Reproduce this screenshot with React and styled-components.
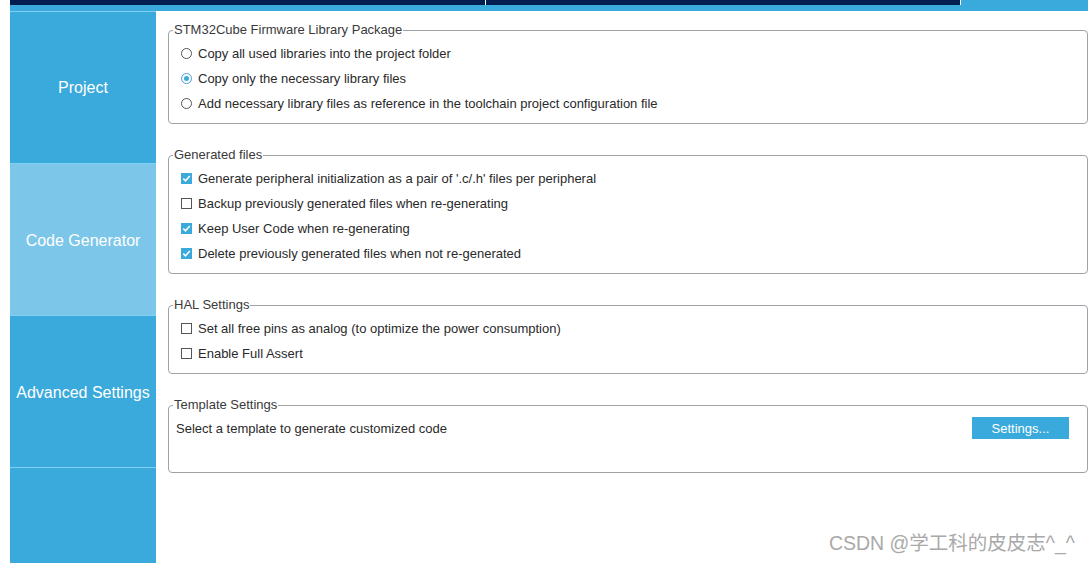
import React from "react";
import styled, { createGlobalStyle } from "styled-components";

const Global = createGlobalStyle`
  html, body { margin: 0; padding: 0; background: #fff; }
  body { font-family: "Liberation Sans", Arial, sans-serif; overflow: hidden; }
  * { box-sizing: border-box; }
`;

const BLUE = "#3aa9db";
const NAVY = "#001e50";

const Page = styled.div`
  position: relative;
  width: 1088px;
  height: 563px;
  display: flex;
  flex-direction: column;
`;

const TopBar = styled.div`
  display: flex;
  height: 5px;
  margin-left: 10px;
`;

const TopTab = styled.div`
  flex: ${(p) => (p.$grow ? 1 : "none")};
  width: ${(p) => (p.$w ? p.$w + "px" : "auto")};
  background: ${(p) => (p.$active ? BLUE : NAVY)};
  border-right: ${(p) => (p.$last ? "none" : "1px solid #fff")};
`;

const Strip = styled.div`
  height: 6px;
  margin-left: 10px;
  background: ${BLUE};
`;

const Main = styled.div`
  flex: 1;
  display: flex;
`;

const Sidebar = styled.nav`
  width: 146px;
  margin-left: 10px;
  background: ${BLUE};
  border-top: 1px solid #7fd0f3;
  display: flex;
  flex-direction: column;
`;

const NavItem = styled.div`
  height: 152px;
  padding-top: ${(p) => (p.$first ? 0 : 2)}px;
  border-bottom: 1px solid #7fd0f3;
  background: ${(p) => (p.$selected ? "#7cc6e9" : BLUE)};
  color: #fff;
  font-family: "Liberation Sans", Arial, sans-serif;
  font-size: 16px;
  display: flex;
  align-items: center;
  justify-content: center;
  white-space: nowrap;
`;

const Content = styled.div`
  flex: 1;
  padding: 12px 0 0 12px;
  display: flex;
  flex-direction: column;
  gap: 24px;
`;

const Group = styled.fieldset`
  margin: 0;
  padding: 4px 0 7px 12px;
  border: 1px solid #9ea3a8;
  border-radius: 4px;
  min-width: 0;
  display: flex;
  flex-direction: column;
`;

const Legend = styled.legend`
  font-size: 13px;
  line-height: 14px;
  color: #3a3a3a;
  padding: 0 1px;
  margin-left: -8px;
`;

const Row = styled.div`
  height: 25px;
  display: flex;
  align-items: center;
  gap: 6px;
  font-size: 13px;
  color: #2a2a2a;
  white-space: nowrap;
`;

const Radio = styled.span`
  width: 11px;
  height: 11px;
  border-radius: 50%;
  border: 1px solid ${(p) => (p.$on ? "#4a9fd0" : "#555")};
  background: #fff;
  display: inline-flex;
  align-items: center;
  justify-content: center;
  flex: none;
  &::after {
    content: "";
    display: ${(p) => (p.$on ? "block" : "none")};
    width: 5px;
    height: 5px;
    border-radius: 50%;
    background: ${BLUE};
  }
`;

const Box = styled.span`
  width: 11px;
  height: 11px;
  flex: none;
  border: 1px solid ${(p) => (p.$on ? BLUE : "#555")};
  background: ${(p) => (p.$on ? BLUE : "#fff")};
  display: inline-flex;
  align-items: center;
  justify-content: center;
`;

const TemplateRow = styled.div`
  display: flex;
  align-items: center;
  justify-content: space-between;
  padding: 1px 18px 26px 0;
  margin-left: -5px;
  font-size: 13px;
  color: #2a2a2a;
`;

const Button = styled.button`
  width: 97px;
  height: 22px;
  border: none;
  background: ${BLUE};
  color: #fff;
  font-family: "Liberation Sans", Arial, sans-serif;
  font-size: 13px;
  padding: 0;
`;

const Watermark = styled.div`
  position: absolute;
  right: 13px;
  bottom: 7px;
  font-family: "Liberation Sans", "Noto Sans CJK SC", sans-serif;
  font-size: 19.5px;
  color: #a9a9a9;
  text-shadow: 0 0 1px #fff;
  white-space: nowrap;
`;

const Check = () => (
  <svg width="9" height="9" viewBox="0 0 9 9">
    <path d="M1.3 4.6 L3.5 6.8 L7.8 2" fill="none" stroke="#fff" strokeWidth="1.6" />
  </svg>
);

const CheckRow = ({ on, children }) => (
  <Row>
    <Box $on={on}>{on && <Check />}</Box>
    {children}
  </Row>
);

const RadioRow = ({ on, children }) => (
  <Row>
    <Radio $on={on} />
    {children}
  </Row>
);

export default function App() {
  return (
    <Page>
      <Global />
      <TopBar>
        <TopTab $w={476} />
        <TopTab $w={475} />
        <TopTab $grow $active $last />
      </TopBar>
      <Strip />
      <Main>
        <Sidebar>
          <NavItem $first>Project</NavItem>
          <NavItem $selected>Code Generator</NavItem>
          <NavItem>Advanced Settings</NavItem>
        </Sidebar>
        <Content>
          <Group>
            <Legend>STM32Cube Firmware Library Package</Legend>
            <RadioRow>Copy all used libraries into the project folder</RadioRow>
            <RadioRow on>Copy only the necessary library files</RadioRow>
            <RadioRow>Add necessary library files as reference in the toolchain project configuration file</RadioRow>
          </Group>
          <Group>
            <Legend>Generated files</Legend>
            <CheckRow on>Generate peripheral initialization as a pair of '.c/.h' files per peripheral</CheckRow>
            <CheckRow>Backup previously generated files when re-generating</CheckRow>
            <CheckRow on>Keep User Code when re-generating</CheckRow>
            <CheckRow on>Delete previously generated files when not re-generated</CheckRow>
          </Group>
          <Group>
            <Legend>HAL Settings</Legend>
            <CheckRow>Set all free pins as analog (to optimize the power consumption)</CheckRow>
            <CheckRow>Enable Full Assert</CheckRow>
          </Group>
          <Group>
            <Legend>Template Settings</Legend>
            <TemplateRow>
              <span>Select a template to generate customized code</span>
              <Button>Settings...</Button>
            </TemplateRow>
          </Group>
        </Content>
      </Main>
      <Watermark>CSDN @学工科的皮皮志^_^</Watermark>
    </Page>
  );
}
